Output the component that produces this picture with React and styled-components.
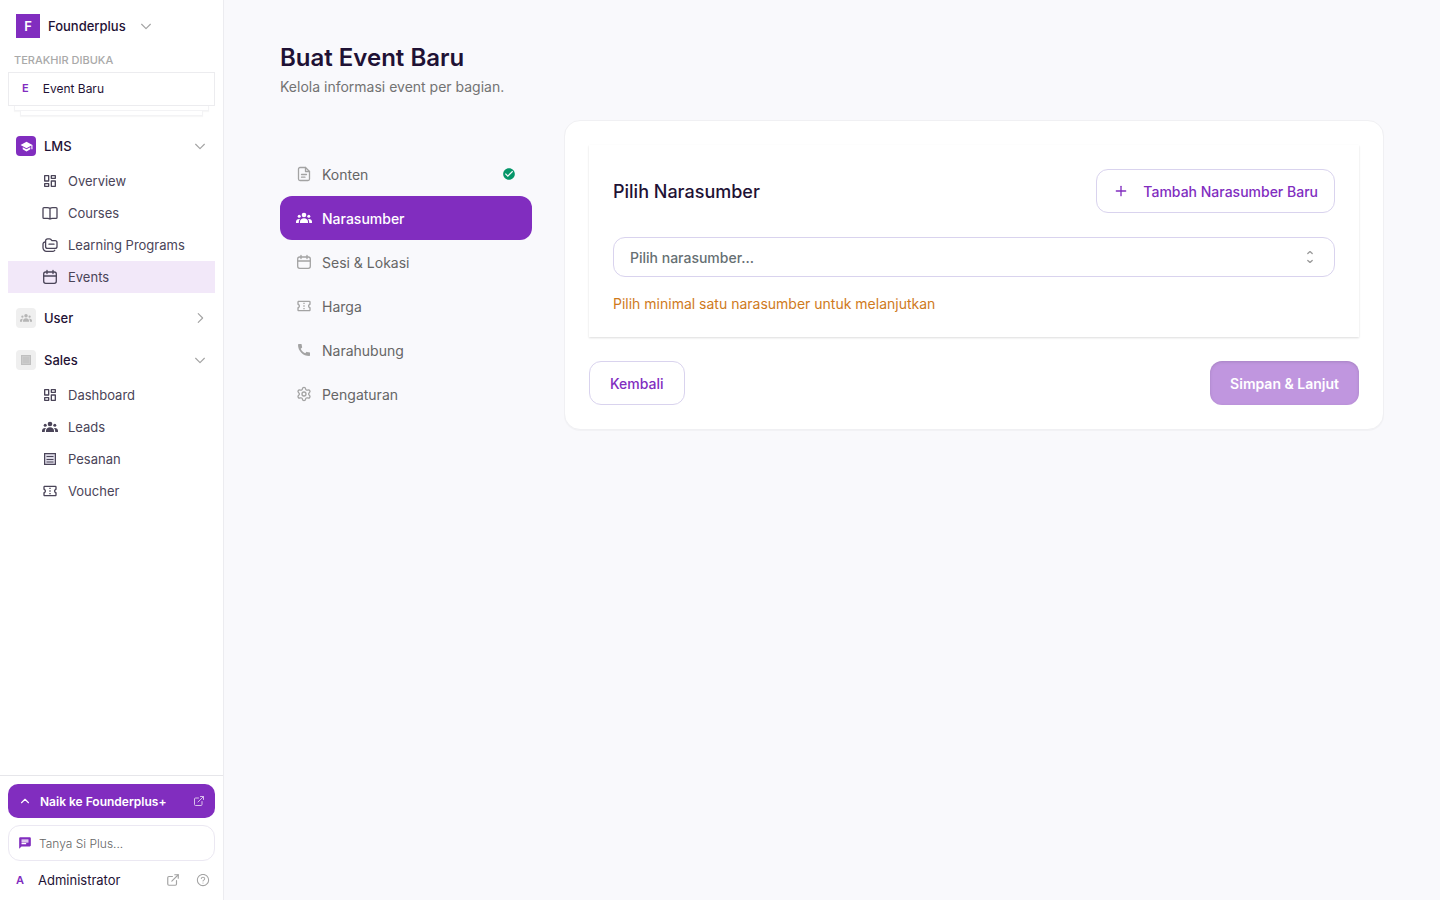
import React from "react"
import styled, { createGlobalStyle } from 'styled-components'
import { Plus, Settings } from 'lucide-react'
import { RiDashboardLine } from 'react-icons/ri'
import { MdOutlineConfirmationNumber, MdCall, MdSchool, MdChat, MdCheckCircle } from 'react-icons/md'
import { AiOutlineQuestionCircle } from 'react-icons/ai'
import { FiExternalLink } from 'react-icons/fi'

const GlobalStyle = createGlobalStyle`
    * {
        box-sizing: border-box;
    }

    body {
        margin: 0;
        background: #f9f9fc;
        color: #1f1235;
        font-family: Inter, "Liberation Sans", sans-serif;
        font-size: 14px;
    }

    button, input, select {
        font-family: inherit;
        font-size: inherit;
    }

    svg {
        flex-shrink: 0;
    }
`

const Layout = styled.div`
    display: flex;
    min-height: 100vh;
`

const Sidebar = styled.aside`
    display: flex;
    flex-direction: column;
    flex-shrink: 0;
    width: 224px;
    height: 100vh;
    background: #fff;
    border-right: 1px solid #ececf0;
`

const SidebarTop = styled.div`
    flex: 1;
    padding: 14px 8px 0;
`

const Brand = styled.button`
    display: flex;
    align-items: center;
    gap: 8px;
    height: 24px;
    padding: 0 8px;
    border: 0;
    background: none;
    color: #1f1235;
    font-size: 13px;
    font-weight: 500;

    svg {
        margin-left: 5px;
        color: #a3a3a3;
    }
`

const BrandLogo = styled.span`
    display: grid;
    place-items: center;
    width: 24px;
    height: 24px;
    background: #812dbf;
    color: #fff;
    font-weight: 600;
`

const RecentLabel = styled.p`
    margin: 14px 0 4px;
    padding-left: 6px;
    color: #a9a9a9;
    font-size: 11px;
    font-weight: 500;
    line-height: 16px;
`

const RecentCard = styled.a`
    display: flex;
    align-items: center;
    gap: 14px;
    height: 34px;
    padding: 0 0 2px 13px;
    border: 1px solid #ececef;
    background: #fff;
    color: #1f1235;
    font-size: 12px;
    text-decoration: none;
`

const Initial = styled.span`
    color: #812dbf;
    font-size: 11px;
    font-weight: 600;
`

const StackSheet = styled.div`
    height: 5px;
    margin: 0 ${props => props.$inset}px;
    border: 1px solid #f3f3f5;
    border-top: 0;
    background: #fff;
    box-shadow: 0 1px 1px rgba(0, 0, 0, 0.03);
`

const Nav = styled.nav`
    display: flex;
    flex-direction: column;
    gap: 8px;
    margin-top: 13px;
`

const GroupHeader = styled.button`
    display: flex;
    align-items: center;
    gap: 8px;
    width: 100%;
    height: 34px;
    padding: 0 8px;
    border: 0;
    background: none;
    color: #1f1235;
    font-size: 13px;
    font-weight: 500;

    > svg {
        margin-left: auto;
        color: #a3a3a3;
    }
`

const GroupBadge = styled.span`
    display: grid;
    place-items: center;
    width: 20px;
    height: 20px;
    border-radius: 4px;
    background: ${props => props.$active ? '#812dbf' : '#efefef'};
    color: ${props => props.$active ? '#fff' : '#b5b5b5'};
`

const GroupItems = styled.ul`
    margin: 0;
    padding: 2px 0 0;
    list-style: none;
`

const NavLink = styled.a`
    display: flex;
    align-items: center;
    gap: 10px;
    height: 32px;
    padding: 0 0 1px 34px;
    background: ${props => props.$active ? '#f2e8f9' : 'transparent'};
    color: #4a4458;
    font-size: 13px;
    text-decoration: none;
`

const SidebarFooter = styled.div`
    padding: 8px 8px 0;
    border-top: 1px solid #e6e6ea;
`

const UpgradeButton = styled.button`
    display: flex;
    align-items: center;
    gap: 8px;
    width: 100%;
    height: 34px;
    padding: 0 10px;
    border: 0;
    border-radius: 10px;
    background: #812dbf;
    color: #fff;
    font-size: 12px;
    font-weight: 600;

    svg:last-child {
        margin-left: auto;
        opacity: 0.7;
    }
`

const AskBox = styled.label`
    display: flex;
    align-items: center;
    gap: 7px;
    height: 36px;
    margin-top: 7px;
    padding: 0 9px;
    border: 1px solid #ebe8f2;
    border-radius: 12px;
    color: #812dbf;

    input {
        flex: 1;
        min-width: 0;
        padding: 0;
        border: 0;
        outline: 0;
        background: none;
        font-size: 12px;
        font-weight: 300;
    }

    input::placeholder {
        color: #666;
        opacity: 1;
    }
`

const Account = styled.div`
    display: flex;
    align-items: center;
    gap: 14px;
    height: 39px;
    padding: 0 4px 1px 8px;
    font-size: 13px;
`

const AccountName = styled.span`
    flex: 1;
`

const IconButton = styled.button`
    display: grid;
    place-items: center;
    width: 16px;
    height: 16px;
    padding: 0;
    border: 0;
    background: none;
    color: #a3a3a3;
`

const Main = styled.main`
    flex: 1;
    min-width: 0;
    padding: 40px 56px;
`

const Title = styled.h1`
    margin: 0;
    font-size: 24px;
    font-weight: 600;
    line-height: 36px;
`

const Subtitle = styled.p`
    margin: 1px 0 23px;
    color: #737373;
    line-height: 20px;
`

const Columns = styled.div`
    display: grid;
    grid-template-columns: 252px 1fr;
    align-items: start;
    gap: 32px;
`

const Steps = styled.nav`
    padding-top: 32px;
`

const Step = styled.a`
    display: flex;
    align-items: center;
    gap: 10px;
    height: 44px;
    padding: 0 16px;
    border-radius: 12px;
    background: ${props => props.$active ? '#812dbf' : 'transparent'};
    color: ${props => props.$active ? '#fff' : '#666'};
    font-weight: ${props => props.$active ? 500 : 400};
    text-decoration: none;

    > svg:first-child {
        color: ${props => props.$active ? '#fff' : '#a3a3a3'};
    }
`

const StepName = styled.span`
    flex: 1;
`

const Card = styled.form`
    padding: 24px;
    border: 1px solid #f0f0f3;
    border-radius: 16px;
    background: #fff;
    box-shadow: 0 1px 1px rgba(0, 0, 0, 0.03);
`

const Section = styled.section`
    padding: 24px;
    box-shadow: 0 1px 2px rgba(0, 0, 0, 0.14);
`

const SectionHeader = styled.div`
    display: flex;
    align-items: center;
    justify-content: space-between;
    margin-bottom: 24px;
`

const SectionTitle = styled.h2`
    margin: 0;
    font-size: 18px;
    font-weight: 500;
`

const Button = styled.button`
    display: flex;
    align-items: center;
    justify-content: center;
    gap: 14px;
    height: 44px;
    padding: 0 ${props => props.$icon ? 16 : 20}px;
    border: 1px solid #d9d3ee;
    border-radius: 12px;
    background: #fff;
    color: #812dbf;
    font-weight: 500;
`

const PrimaryButton = styled(Button)`
    border: 0;
    background: #c096df;
    color: #fff;
    font-weight: 600;
    box-shadow: inset 0 1px 3px rgba(110, 90, 130, 0.3);
`

const SelectBox = styled.div`
    display: grid;
    align-items: center;
    height: 40px;

    > * {
        grid-area: 1 / 1;
    }

    > svg {
        justify-self: end;
        margin-right: 17px;
        color: #999;
        pointer-events: none;
    }
`

const Select = styled.select`
    width: 100%;
    height: 40px;
    padding: 0 16px;
    border: 1px solid #d9d3ee;
    border-radius: 12px;
    appearance: none;
    background: #fff;
    color: #666f73;
    font-weight: 500;
`

const Hint = styled.p`
    margin: 18px 0 0;
    color: #cf7a1c;
    line-height: 18px;
`

const Actions = styled.div`
    display: flex;
    justify-content: space-between;
    margin-top: 24px;
`

function LineIcon({size = 16, children}){
    return (
        <svg width={size} height={size} viewBox="0 0 16 16" fill="none" stroke="currentColor" strokeWidth="1.3" strokeLinecap="round" strokeLinejoin="round">
            {children}
        </svg>
    )
}

const chevrons = {
    down: 'M3 6l5 5 5-5',
    right: 'M6 3l5 5-5 5',
    up: 'M4 10l4-4 4 4',
    upDown: 'M5.8 4.6l2.2-2 2.2 2M5.8 11.4l2.2 2 2.2-2',
}

function Chevron({to, size}){
    return <LineIcon size={size}><path d={chevrons[to]} /></LineIcon>
}

function BookIcon({size}){
    return (
        <LineIcon size={size}>
            <path d="M8 3.4C7.2 2.8 6.4 2.6 5.4 2.6H2a1 1 0 0 0-1 1v8.8a1 1 0 0 0 1 1h3.6c1 0 1.8.2 2.4.7.6-.5 1.4-.7 2.4-.7H14a1 1 0 0 0 1-1V3.6a1 1 0 0 0-1-1h-3.4c-1 0-1.8.2-2.6.8Zm0 0v10.4" />
        </LineIcon>
    )
}

function FoldersIcon({size}){
    return (
        <LineIcon size={size}>
            <path d="M3.6 4v5.4a2 2 0 0 0 2 2H13a2 2 0 0 0 2-2V5.6a2 2 0 0 0-2-2H9.9L8.7 2.3a1.6 1.6 0 0 0-1.2-.5H5.6a2 2 0 0 0-2 2.2Z" />
            <path d="M3.4 5A2.2 2.2 0 0 0 1 7.2v3.6a3.5 3.5 0 0 0 3.5 3.5h6.6a2 2 0 0 0 1.7-1" />
            <path d="M7 7.2h5" />
        </LineIcon>
    )
}

function CalendarIcon({size}){
    return (
        <LineIcon size={size}>
            <rect x="1.7" y="3" width="12.6" height="11.3" rx="2" />
            <path d="M1.7 7h12.6M5 1.3v3.2M11 1.3v3.2" />
        </LineIcon>
    )
}

function DocumentIcon({size}){
    return (
        <LineIcon size={size}>
            <path d="M9.5 1.5H4A1.5 1.5 0 0 0 2.5 3v10A1.5 1.5 0 0 0 4 14.5h8a1.5 1.5 0 0 0 1.5-1.5V5.5Z" />
            <path d="M9.5 1.5v4h4M5.5 8.5h5M5.5 11.2H9" />
        </LineIcon>
    )
}

function PeopleIcon({size = 16}){
    return (
        <svg width={size} height={size} viewBox="0 0 16 16" fill="currentColor">
            <circle cx="8" cy="5" r="2.3" />
            <circle cx="3.2" cy="6.3" r="1.5" />
            <circle cx="12.8" cy="6.3" r="1.5" />
            <path d="M4 13v-1.2C4 9.7 5.8 8.3 8 8.3s4 1.4 4 3.5V13Z" />
            <path d="M0 13v-1.3c0-1.6 1.2-2.8 3.2-2.8.3 0 .6 0 .8.1-.8.9-1.2 2-1.2 3v1ZM16 13v-1.3c0-1.6-1.2-2.8-3.2-2.8-.3 0-.6 0-.8.1.8.9 1.2 2 1.2 3v1Z" />
        </svg>
    )
}

function OrdersIcon({size = 16}){
    return (
        <svg width={size} height={size} viewBox="0 0 16 16" fill="none" stroke="currentColor" strokeWidth="1.2">
            <rect x="2.6" y="2.6" width="10.8" height="10.8" fill="#dcdae6" />
            <path d="M4.5 5.5h7M4.5 8.5h7M4.5 11h7" />
        </svg>
    )
}

function SalesIcon(){
    return (
        <svg width="12" height="12" viewBox="0 0 12 12" fill="#ccc" stroke="#c0c0c0">
            <rect x="1.5" y="1.5" width="9" height="9" />
            <path d="M3 4h6M3 6h6M3 8h6" />
        </svg>
    )
}

const groups = [
    {
        name: 'LMS',
        icon: <MdSchool size={13} />,
        active: true,
        items: [
            { name: 'Overview', icon: RiDashboardLine },
            { name: 'Courses', icon: BookIcon },
            { name: 'Learning Programs', icon: FoldersIcon },
            { name: 'Events', icon: CalendarIcon, active: true },
        ],
    },
    { name: 'User', icon: <PeopleIcon size={12} />, items: [] },
    {
        name: 'Sales',
        icon: <SalesIcon />,
        items: [
            { name: 'Dashboard', icon: RiDashboardLine },
            { name: 'Leads', icon: PeopleIcon },
            { name: 'Pesanan', icon: OrdersIcon },
            { name: 'Voucher', icon: MdOutlineConfirmationNumber },
        ],
    },
]

const steps = [
    { name: 'Konten', icon: DocumentIcon, done: true },
    { name: 'Narasumber', icon: PeopleIcon, active: true },
    { name: 'Sesi & Lokasi', icon: CalendarIcon },
    { name: 'Harga', icon: MdOutlineConfirmationNumber },
    { name: 'Narahubung', icon: MdCall },
    { name: 'Pengaturan', icon: Settings },
]

function NavGroup({group}){
    const open = group.items.length > 0

    return (
        <div>
            <GroupHeader type="button" aria-expanded={open}>
                <GroupBadge $active={group.active}>{group.icon}</GroupBadge>
                {group.name}
                <Chevron to={open ? 'down' : 'right'} size={14} />
            </GroupHeader>
            {open && (
                <GroupItems>
                    {group.items.map(item => (
                        <li key={item.name}>
                            <NavLink href="#" $active={item.active}>
                                <item.icon size={16} />
                                {item.name}
                            </NavLink>
                        </li>
                    ))}
                </GroupItems>
            )}
        </div>
    )
}

function AppSidebar(){
    return (
        <Sidebar>
            <SidebarTop>
                <Brand type="button">
                    <BrandLogo>F</BrandLogo>
                    Founderplus
                    <Chevron to="down" size={14} />
                </Brand>
                <RecentLabel>TERAKHIR DIBUKA</RecentLabel>
                <RecentCard href="#">
                    <Initial>E</Initial>
                    Event Baru
                </RecentCard>
                <StackSheet $inset={6} />
                <StackSheet $inset={12} />
                <Nav>
                    {groups.map(group => <NavGroup key={group.name} group={group} />)}
                </Nav>
            </SidebarTop>
            <SidebarFooter>
                <UpgradeButton type="button">
                    <Chevron to="up" size={14} />
                    Naik ke Founderplus+
                    <FiExternalLink size={12} />
                </UpgradeButton>
                <AskBox>
                    <MdChat size={14} />
                    <input type="text" placeholder="Tanya Si Plus..." aria-label="Tanya Si Plus" />
                </AskBox>
                <Account>
                    <Initial>A</Initial>
                    <AccountName>Administrator</AccountName>
                    <IconButton type="button" aria-label="Buka situs"><FiExternalLink size={14} /></IconButton>
                    <IconButton type="button" aria-label="Bantuan"><AiOutlineQuestionCircle size={14} /></IconButton>
                </Account>
            </SidebarFooter>
        </Sidebar>
    )
}

function SpeakerForm(){
    return (
        <Card onSubmit={e => e.preventDefault()}>
            <Section>
                <SectionHeader>
                    <SectionTitle>Pilih Narasumber</SectionTitle>
                    <Button type="button" $icon>
                        <Plus size={16} />
                        Tambah Narasumber Baru
                    </Button>
                </SectionHeader>
                <SelectBox>
                    <Select aria-label="Pilih narasumber" defaultValue="">
                        <option value="">Pilih narasumber...</option>
                    </Select>
                    <Chevron to="upDown" size={16} />
                </SelectBox>
                <Hint>Pilih minimal satu narasumber untuk melanjutkan</Hint>
            </Section>
            <Actions>
                <Button type="button">Kembali</Button>
                <PrimaryButton type="submit" disabled>Simpan &amp; Lanjut</PrimaryButton>
            </Actions>
        </Card>
    )
}

function App(){
    return (
        <Layout>
            <GlobalStyle />
            <AppSidebar />
            <Main>
                <Title>Buat Event Baru</Title>
                <Subtitle>Kelola informasi event per bagian.</Subtitle>
                <Columns>
                    <Steps>
                        {steps.map(step => (
                            <Step key={step.name} href="#" $active={step.active}>
                                <step.icon size={16} />
                                <StepName>{step.name}</StepName>
                                {step.done && <MdCheckCircle size={14} color="#059669" />}
                            </Step>
                        ))}
                    </Steps>
                    <SpeakerForm />
                </Columns>
            </Main>
        </Layout>
    )
}
export default App;
